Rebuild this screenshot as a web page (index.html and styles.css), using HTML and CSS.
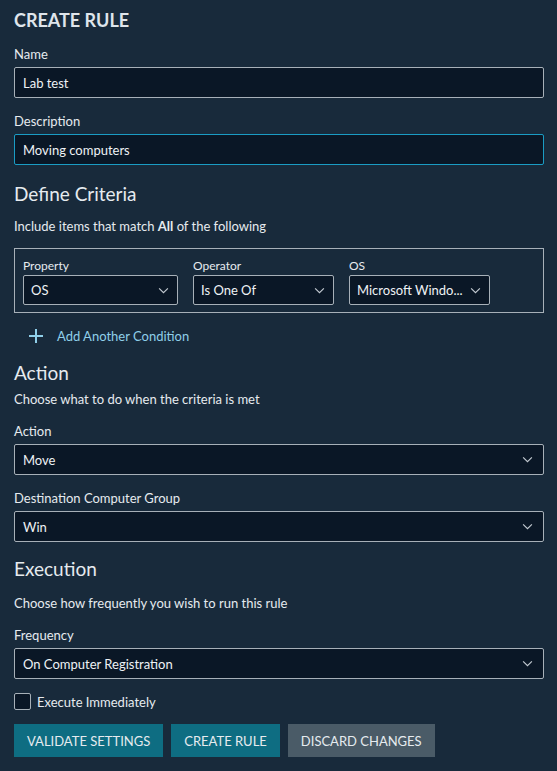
FILE: index.html
```html
<!DOCTYPE html>
<html>
<head>
<meta charset="utf-8">
<link rel="stylesheet" href="styles.css">
</head>
<body>
<div class="page">
  <h1 class="title">CREATE RULE</h1>

  <div class="field first">
    <label class="label">Name</label>
    <div class="input">Lab test</div>
  </div>
  <div class="field">
    <label class="label">Description</label>
    <div class="input focus">Moving computers</div>
  </div>

  <h2 class="heading h-criteria">Define Criteria</h2>
  <p class="text t-include">Include items that match <b>All</b> of the following</p>

  <div class="criteria">
    <div class="cfield c-prop">
      <label class="clabel">Property</label>
      <div class="select small"><span>OS</span><svg class="chev" viewBox="0 0 12 8"><path d="M1 1.5 L6 6.5 L11 1.5"/></svg></div>
    </div>
    <div class="cfield c-op">
      <label class="clabel">Operator</label>
      <div class="select small"><span>Is One Of</span><svg class="chev" viewBox="0 0 12 8"><path d="M1 1.5 L6 6.5 L11 1.5"/></svg></div>
    </div>
    <div class="cfield c-os">
      <label class="clabel">OS</label>
      <div class="select small"><span>Microsoft Windo...</span><svg class="chev" viewBox="0 0 12 8"><path d="M1 1.5 L6 6.5 L11 1.5"/></svg></div>
    </div>
  </div>

  <div class="add">
    <svg class="plus" viewBox="0 0 16 16"><path d="M8 1 V15 M1 8 H15"/></svg>
    <span>Add Another Condition</span>
  </div>

  <h2 class="heading h-action">Action</h2>
  <p class="text t-action">Choose what to do when the criteria is met</p>

  <div class="field">
    <label class="label">Action</label>
    <div class="select"><span>Move</span><svg class="chev" viewBox="0 0 12 8"><path d="M1 1.5 L6 6.5 L11 1.5"/></svg></div>
  </div>
  <div class="field">
    <label class="label">Destination Computer Group</label>
    <div class="select"><span>Win</span><svg class="chev" viewBox="0 0 12 8"><path d="M1 1.5 L6 6.5 L11 1.5"/></svg></div>
  </div>

  <h2 class="heading h-exec">Execution</h2>
  <p class="text t-exec">Choose how frequently you wish to run this rule</p>

  <div class="field">
    <label class="label">Frequency</label>
    <div class="select"><span>On Computer Registration</span><svg class="chev" viewBox="0 0 12 8"><path d="M1 1.5 L6 6.5 L11 1.5"/></svg></div>
  </div>

  <div class="check">
    <span class="box"></span>
    <span>Execute Immediately</span>
  </div>

  <div class="buttons">
    <button class="btn primary">VALIDATE SETTINGS</button>
    <button class="btn primary">CREATE RULE</button>
    <button class="btn secondary">DISCARD CHANGES</button>
  </div>
</div>
</body>
</html>
```

FILE: styles.css
```css
html, body {
  margin: 0;
  padding: 0;
  background: #182a3b;
}
body {
  font-family: Lato, "Noto Sans", sans-serif;
  color: #e6ebef;
  font-size: 13px;
}
.page {
  width: 530px;
  padding: 0 13px 0 14px;
  display: flex;
  flex-direction: column;
}
.title {
  margin: 8px 0 0 0;
  font-size: 18px;
  font-weight: 700;
  line-height: 24px;
  color: #dfe5eb;
}
.field {
  display: flex;
  flex-direction: column;
}
.label {
  font-size: 13px;
  line-height: 18px;
  margin-top: 14px;
  margin-bottom: 4px;
}
.field.first .label { margin-top: 13px; }
.input, .select {
  box-sizing: border-box;
  height: 31px;
  background: #0a1726;
  border: 1px solid #a7b0b8;
  border-radius: 2px;
  padding: 0 8px;
  display: flex;
  align-items: center;
  font-size: 13px;
  color: #eef2f5;
}
.input.focus { border-color: #1a9cc4; }
.select { justify-content: space-between; padding-right: 10px; }
.chev {
  width: 11px;
  height: 7px;
  fill: none;
  stroke: #c3cad1;
  stroke-width: 1.3;
}
.heading {
  margin: 0;
  font-size: 19px;
  font-weight: 400;
  line-height: 26px;
  color: #e6ebef;
}
.h-criteria { margin-top: 16px; }
.h-action { margin-top: 15px; }
.h-exec { margin-top: 14px; }
.text {
  margin: 0;
  font-size: 13px;
  line-height: 18px;
}
.t-include { margin-top: 10px; }
.t-action { margin-top: 4px; }
.t-exec { margin-top: 12px; }
.criteria {
  margin-top: 13px;
  border: 1px solid #a7b0b8;
  height: 65px;
  box-sizing: border-box;
  display: flex;
  gap: 15px;
  padding: 9px 8px 0 8px;
}
.cfield { display: flex; flex-direction: column; }
.c-prop { width: 155px; }
.c-op { width: 141px; }
.c-os { width: 141px; }
.clabel {
  font-size: 12px;
  line-height: 16px;
  margin-bottom: 1px;
  color: #e6ebef;
}
.select.small { height: 30px; padding-left: 7px; padding-right: 8px; }
.add {
  display: flex;
  align-items: center;
  gap: 13px;
  margin: 14px 0 0 14px;
  color: #8fcfe9;
  font-size: 13px;
  line-height: 18px;
}
.plus {
  width: 16px;
  height: 16px;
  fill: none;
  stroke: #8fcfe9;
  stroke-width: 2;
}
.check {
  display: flex;
  align-items: center;
  gap: 6px;
  margin-top: 14px;
  font-size: 13px;
}
.box {
  width: 17px;
  height: 17px;
  box-sizing: border-box;
  border: 1px solid #a7b0b8;
  border-radius: 2px;
  background: #0a1726;
}
.buttons {
  display: flex;
  gap: 8px;
  margin-top: 14px;
}
.btn {
  height: 33px;
  border: none;
  font-family: inherit;
  font-size: 13px;
  color: #e6ebef;
  padding: 0 13px;
  cursor: pointer;
}
.primary { background: #0e6d82; }
.secondary { background: #4a5b67; }
```
